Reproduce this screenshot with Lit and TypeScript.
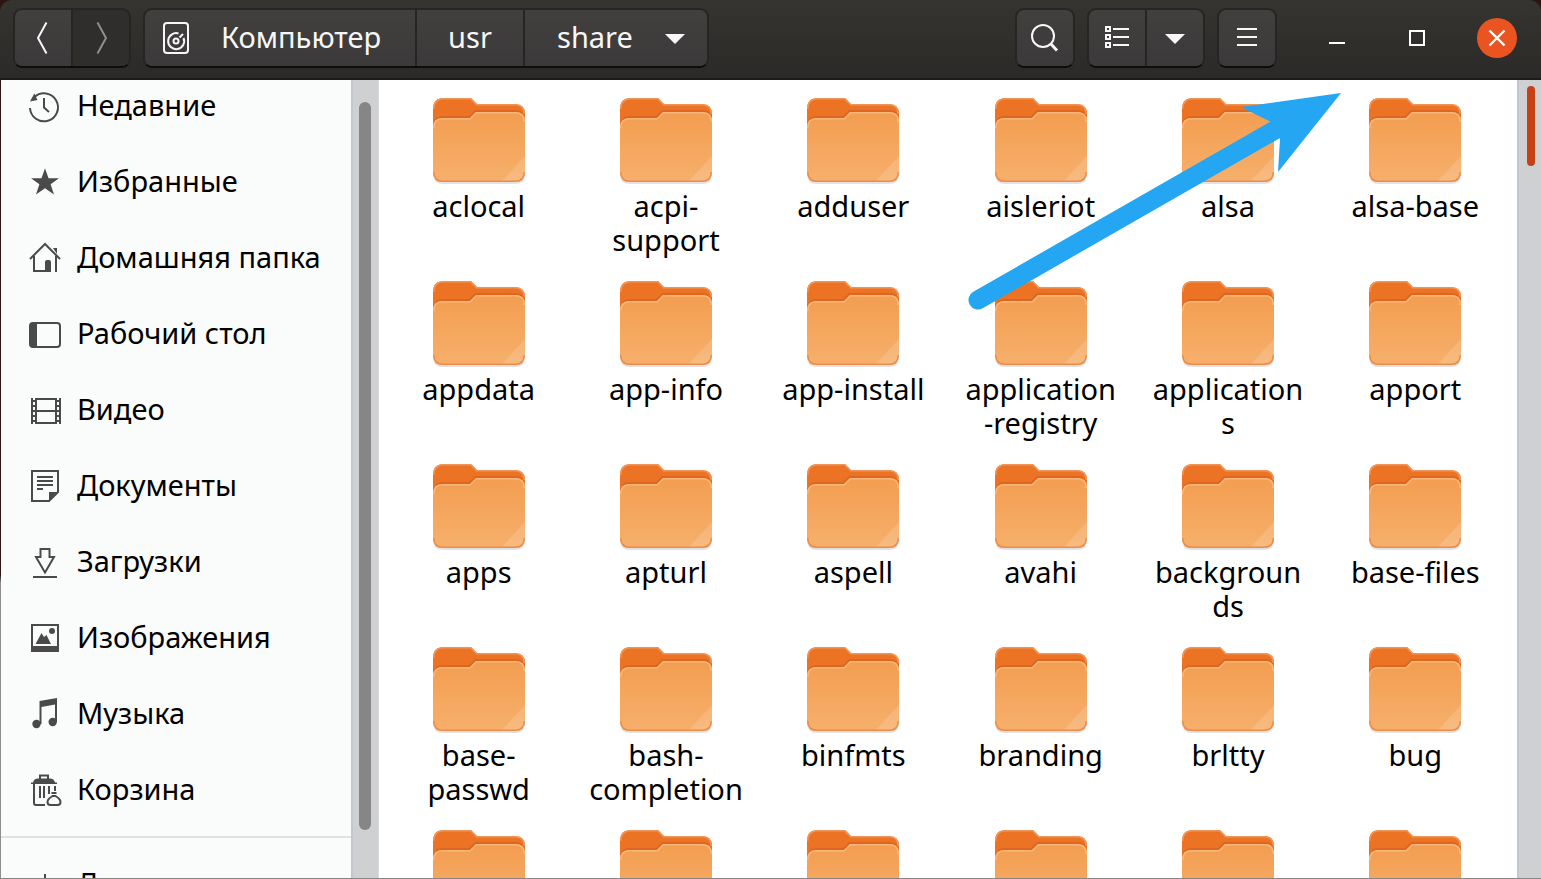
import { LitElement, html, css, svg, nothing } from "lit";
import { customElement, property } from "lit/decorators.js";

const glyphs: Record<string, unknown> = {
  back: svg`<path d="M19.5 .5 11 16l8.5 15.5" class="line"/>`,
  forward: svg`<path d="M12.5 .5 21 16l-8.5 15.5" class="line"/>`,
  search: svg`<circle cx="14" cy="14" r="11" class="line"/><path d="M21.5 21.5 28 28.5" class="line thick"/>`,
  list: svg`<path d="M5 5h4v4H5zM5 13h4v4H5zM5 21h4v4H5zM12 7h16M12 15h16M12 23h16" class="line"/>`,
  caret: svg`<path d="M6 12h20L16 22z" class="solid"/>`,
  menu: svg`<path d="M6 7h20M6 15h20M6 23h20" class="line"/>`,
  minimize: svg`<path d="M8 21h16" class="line"/>`,
  maximize: svg`<path d="M9 9h14v14H9z" class="line"/>`,
  close: svg`<path d="M8.5 8.5l15 15M23.5 8.5l-15 15" class="line medium"/>`,
  recent: svg`<path d="M1 18A14 14 0 1 0 5.5 7" class="line"/><path d="M5.3 3.5 1 11.5l7.5-1.500z" class="solid"/><path d="M15 8v9.5l5 4.5" class="line"/>`,
  star: svg`<path d="M16 2.300l3.500 10H30l-8.400 6L25 28.500l-9-6.200-9 6.200 3.400-10.200-8.400-6h10.500z" class="solid"/>`,
  home: svg`<path d="M1 17 16 2l15 15M5 14v15h12M27 14v16" class="line"/><path d="M16 30V20q0-2 2-2h2q2 0 2 2v10zM24 6h4v6z" class="solid"/>`,
  desktop: svg`<rect x="1" y="5" width="30" height="24" rx="3" class="line"/><path d="M1 8q0-3 3-3h4v24H4q-3 0-3-3z" class="solid"/>`,
  video: svg`<path d="M3 4v26M31 4v26M7 4v26M27 4v26M7 5h20M7 17h20M7 29h20M3 7h4M3 12h4M3 17h4M3 22h4M3 27h4M27 7h4M27 12h4M27 17h4M27 22h4M27 27h4" class="line"/>`,
  document: svg`<path d="M3 1h26v21l-9 9H3zM8 7h16M8 11h16M8 15h16M8 19h6" class="line"/><path d="M29 22h-9v9z" class="solid"/>`,
  download: svg`<path d="M11.5 3h9v8h4.500l-9 15.500L7 11h4.500zM4 31h24" class="line"/>`,
  image: svg`<path d="M3 3h26v26H3z" class="line"/><path d="M3 24h26v5H3zM6.500 22l6-11 2.500 4 2.500-2L22 22z" class="solid"/><circle cx="23" cy="9" r="3" class="solid"/>`,
  music: svg`<path d="M10.500 26V3L28 0v24h-2V6.500L12.500 9v17z" class="solid"/><circle cx="7.5" cy="26" r="4.2" class="solid"/><circle cx="23.7" cy="24" r="4.2" class="solid"/>`,
  trash: svg`<path d="M11 5V1.500h8V5M5 10v19q0 2 2 2h9M26 12v5M11 12v12M15 12v12M20 12v8M22.500 19h5" class="line"/><path d="M2 10V8.500h2Q5 4.500 9 4.500h12q4 0 5 4h2V10z" class="solid"/><path d="M23.500 22h3q5 3 5 6t-3 3h-7q-3 0-3-3t5-6z" class="line"/>`,
  plus: svg`<path d="M16 6v20M6 16h20" class="line"/>`,
};

@customElement("ui-icon")
class UiIcon extends LitElement {
  @property() name = "";

  static styles = css`
    :host { display: block; flex: none; width: 32px; height: 32px; }
    .glyph { display: block; width: 100%; height: 100%; overflow: visible; }
    .line { fill: none; stroke: currentColor; stroke-width: 2; }
    .medium { stroke-width: 2.4; }
    .thick { stroke-width: 3; }
    .solid { fill: currentColor; }
  `;

  render() {
    return html`<svg class="glyph" viewBox="0 0 32 32" aria-hidden="true">${glyphs[this.name] ?? nothing}</svg>`;
  }
}

@customElement("folder-icon")
class FolderIcon extends LitElement {
  static styles = css`
    :host { display: block; flex: none; width: 96px; height: 88px; }
    .folder { display: block; }
  `;

  render() {
    return html`
      <svg class="folder" width="96" height="88" viewBox="0 0 96 88" aria-hidden="true">
        <defs>
          <linearGradient id="front" x1="0" y1="0" x2="0" y2="1">
            <stop offset="0" stop-color="#f39d50" />
            <stop offset="1" stop-color="#f6b06c" />
          </linearGradient>
          <clipPath id="face"><path d="M2 32Q2 22 11 22H39L45 16H85Q94 16 94 26V76Q94 86 84 86H12Q2 86 2 76Z" /></clipPath>
          <clipPath id="rear"><path d="M2 13Q2 2 13 2H40L46 8H84Q94 8 94 18V60H2Z" /></clipPath>
        </defs>
        <path d="M2 60H94V78Q94 88 84 88H12Q2 88 2 78Z" fill="#e2e2e4" />
        <g clip-path="url(#rear)">
          <path d="M0 0H96V60H0Z" fill="#ec7323" />
          <path d="M2 32Q2 20 11 20H38L44 14H85Q94 14 94 26V60H2Z" fill="#dd6720" />
          <path d="M2 13Q2 2 13 2H40L46 8H84Q94 8 94 18" fill="none" stroke="#f0955a" stroke-width="3" />
        </g>
        <g clip-path="url(#face)">
          <path d="M0 14H96V88H0Z" fill="url(#front)" />
          <path d="M94 60V88H68Z" fill="#fff" fill-opacity=".14" />
          <path d="M2 76Q2 86 12 86H84Q94 86 94 76" fill="none" stroke="#ef8b4a" stroke-width="3" />
          <path d="M2 32Q2 22 11 22H39L45 16H85Q94 16 94 26" fill="none" stroke="#f9b77b" stroke-width="3" />
        </g>
      </svg>
    `;
  }
}

const places = [
  ["recent", "Недавние"],
  ["star", "Избранные"],
  ["home", "Домашняя папка"],
  ["desktop", "Рабочий стол"],
  ["video", "Видео"],
  ["document", "Документы"],
  ["download", "Загрузки"],
  ["image", "Изображения"],
  ["music", "Музыка"],
  ["trash", "Корзина"],
];

const folders = [
  "aclocal", "acpi-\nsupport", "adduser", "aisleriot", "alsa", "alsa-base",
  "appdata", "app-info", "app-install", "application\n-registry", "application\ns", "apport",
  "apps", "apturl", "aspell", "avahi", "backgroun\nds", "base-files",
  "base-\npasswd", "bash-\ncompletion", "binfmts", "branding", "brltty", "bug",
  "", "", "", "", "", "",
];

@customElement("app-root")
class AppRoot extends LitElement {
  static styles = css`
    :host {
      display: block;
      height: 100vh;
      background: #2a1512;
      font-family: "Noto Sans", "Open Sans", sans-serif;
      font-size: 29px;
      line-height: 34px;
      color: #000;
    }
    * { box-sizing: border-box; }
    button { font: inherit; margin: 0; cursor: default; }
    .window {
      display: flex;
      flex-direction: column;
      height: 100%;
      overflow: hidden;
      border-radius: 12px 12px 0 0;
      border-bottom: 1px solid #868686;
    }
    .header {
      display: flex;
      flex: none;
      align-items: flex-start;
      gap: 12px;
      height: 80px;
      padding: 8px 24px 0 13px;
      border-bottom: 2px solid #1e1c1a;
      background: linear-gradient(#363431, #2c2a28);
      color: #f7f7f7;
    }
    .spacer { flex: 1; }
    .group {
      display: flex;
      gap: 2px;
      height: 60px;
      border: 2px solid #272523;
      border-bottom-color: #110b0a;
      border-radius: 9px;
      background: #272523;
    }
    .tool {
      display: flex;
      align-items: center;
      justify-content: center;
      width: 56px;
      height: 56px;
      padding: 0;
      border: 0;
      background: linear-gradient(#42403e, #3b393a);
      color: inherit;
    }
    .tool:first-child { border-top-left-radius: 7px; border-bottom-left-radius: 7px; }
    .tool:last-child { border-top-right-radius: 7px; border-bottom-right-radius: 7px; }
    .tool:disabled { background: #302e2c; color: #8f8e8c; }
    .root { width: 270px; gap: 32px; padding: 0 0 0 18px; justify-content: flex-start; }
    .step { width: 106px; }
    .current { width: 182px; justify-content: space-between; padding: 0 16px 0 32px; }
    .text { padding-bottom: 3px; }
    .disk { flex: none; fill: none; stroke: currentColor; stroke-width: 2; }
    .controls { display: flex; gap: 40px; margin-left: 28px; padding-top: 10px; }
    .control {
      display: flex;
      align-items: center;
      justify-content: center;
      width: 40px;
      height: 40px;
      padding: 0;
      border: 0;
      border-radius: 50%;
      background: none;
      color: #fff;
    }
    .close { background: #e95420; }
    .body { display: flex; flex: 1; min-height: 0; }
    .sidebar {
      flex: none;
      width: 351px;
      overflow: hidden;
      border-left: 1px solid;
      border-image: linear-gradient(#2a1512 62%, #8e8e8e 63%) 1;
      background: #fafcfb;
    }
    .places { list-style: none; margin: -12px 0 8px; padding: 0; }
    .place {
      display: flex;
      align-items: center;
      gap: 16px;
      height: 76px;
      padding-left: 28px;
      color: inherit;
      text-decoration: none;
      white-space: nowrap;
    }
    .place ui-icon { color: #4a4a4a; }
    .divider { height: 2px; margin: 0 0 8px; border: 0; background: #e0e2e1; }
    .track { flex: none; border-left: 2px solid #c2c6cd; background: #cfd0d2; }
    .side-track { display: flex; width: 28px; padding: 22px 7px 48px 6px; border-right: 1px solid #dbdbdd; }
    .side-thumb { width: 12px; border-radius: 6px; background: #868686; }
    .main-track { width: 24px; padding: 6px 6px 0 8px; }
    .main-thumb { width: 8px; height: 80px; border-radius: 4px; background: #c64215; }
    .content { position: relative; flex: 1; min-width: 0; overflow: hidden; background: #fff; }
    .grid {
      display: grid;
      grid-template-columns: repeat(6, 1fr);
      grid-auto-rows: 183px;
      list-style: none;
      margin: 0;
      padding: 16px 8px 0 6px;
    }
    .tile { display: flex; flex-direction: column; align-items: center; gap: 5px; }
    .name { text-align: center; white-space: pre; }
    .arrow { position: absolute; top: 13px; left: 589px; pointer-events: none; }
  `;

  render() {
    return html`
      <div class="window">
        <header class="header">
          <div class="group">
            <button class="tool" aria-label="Назад"><ui-icon name="back"></ui-icon></button>
            <button class="tool" aria-label="Вперёд" disabled><ui-icon name="forward"></ui-icon></button>
          </div>
          <nav class="group">
            <button class="tool root">
              <svg class="disk" width="26" height="32" viewBox="0 0 26 32" aria-hidden="true">
                <rect x="1" y="1" width="24" height="30" rx="3" />
                <path d="M20.5 16A8 8 0 1 1 15.5 11.5M16.5 15.5 20 12" />
                <circle cx="13" cy="19" r="2.5" />
              </svg>
              <span class="text">Компьютер</span>
            </button>
            <button class="tool step"><span class="text">usr</span></button>
            <button class="tool current"><span class="text">share</span><ui-icon name="caret"></ui-icon></button>
          </nav>
          <div class="spacer"></div>
          <div class="group">
            <button class="tool" aria-label="Поиск"><ui-icon name="search"></ui-icon></button>
          </div>
          <div class="group">
            <button class="tool" aria-label="Список"><ui-icon name="list"></ui-icon></button>
            <button class="tool" aria-label="Параметры вида"><ui-icon name="caret"></ui-icon></button>
          </div>
          <div class="group">
            <button class="tool" aria-label="Меню"><ui-icon name="menu"></ui-icon></button>
          </div>
          <div class="controls">
            <button class="control" aria-label="Свернуть"><ui-icon name="minimize"></ui-icon></button>
            <button class="control" aria-label="Развернуть"><ui-icon name="maximize"></ui-icon></button>
            <button class="control close" aria-label="Закрыть"><ui-icon name="close"></ui-icon></button>
          </div>
        </header>
        <div class="body">
          <nav class="sidebar">
            <ul class="places">
              ${places.map(([icon, label]) => html`
                <li><a class="place" href="#"><ui-icon name=${icon}></ui-icon><span class="text">${label}</span></a></li>
              `)}
            </ul>
            <hr class="divider" />
            <a class="place" href="#"><ui-icon name="plus"></ui-icon><span class="text">Другие места</span></a>
          </nav>
          <div class="track side-track"><div class="side-thumb"></div></div>
          <main class="content">
            <ul class="grid">
              ${folders.map((name) => html`
                <li class="tile"><folder-icon></folder-icon><span class="name">${name}</span></li>
              `)}
            </ul>
            <svg class="arrow" width="374" height="218" viewBox="968 93 374 218" aria-hidden="true">
              <path d="M978 300 1280 127" fill="none" stroke="#24a6f2" stroke-width="19" stroke-linecap="round" />
              <path d="M1341 93 1241 107 1271 122 1280 139 1278 172Z" fill="#24a6f2" />
            </svg>
          </main>
          <div class="track main-track"><div class="main-thumb"></div></div>
        </div>
      </div>
    `;
  }
}
